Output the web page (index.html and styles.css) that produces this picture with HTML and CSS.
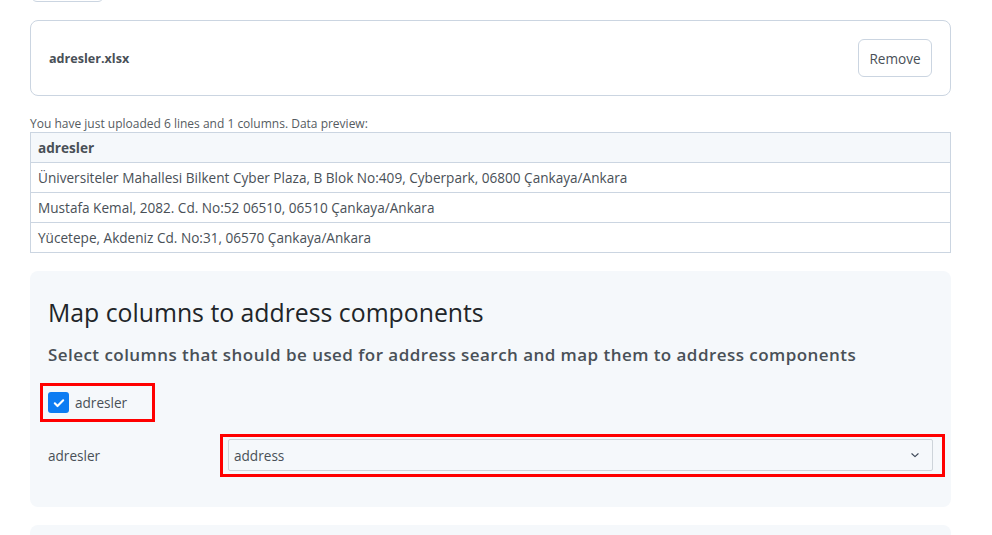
FILE: index.html
```html
<!DOCTYPE html>
<html lang="en">
<head>
<meta charset="utf-8">
<title>Upload addresses</title>
<link rel="stylesheet" href="styles.css">
</head>
<body>
<main class="page">
  <div class="top-actions">
    <button class="btn btn-outline" type="button" aria-label="Browse"></button>
  </div>

  <section class="file-card">
    <span class="file-name">adresler.xlsx</span>
    <button class="btn btn-outline" type="button">Remove</button>
  </section>

  <p class="upload-note">You have just uploaded 6 lines and 1 columns. Data preview:</p>
  <table class="preview">
    <thead>
      <tr><th>adresler</th></tr>
    </thead>
    <tbody>
      <tr><td>Üniversiteler Mahallesi Bilkent Cyber Plaza, B Blok No:409, Cyberpark, 06800 Çankaya/Ankara</td></tr>
      <tr><td>Mustafa Kemal, 2082. Cd. No:52 06510, 06510 Çankaya/Ankara</td></tr>
      <tr><td>Yücetepe, Akdeniz Cd. No:31, 06570 Çankaya/Ankara</td></tr>
    </tbody>
  </table>

  <section class="panel">
    <h2 class="panel-title">Map columns to address components</h2>
    <h3 class="panel-sub">Select columns that should be used for address search and map them to address components</h3>

    <div class="column-picks">
      <label class="check marked-check">
        <span class="check-box">
          <svg viewBox="0 0 16 16" width="14" height="14" aria-hidden="true"><path d="M3.2 8.4l3.1 3.1 6.5-6.6" fill="none" stroke="#fff" stroke-width="2.4" stroke-linecap="round" stroke-linejoin="round"/></svg>
        </span>
        <span class="check-label">adresler</span>
      </label>
    </div>

    <div class="map-row">
      <span class="map-label">adresler</span>
      <div class="select-wrap highlight">
        <div class="select">
          <span>address</span>
          <svg class="chev" viewBox="0 0 16 16" width="10" height="10" aria-hidden="true"><path d="M3 6l5 4.5L13 6" fill="none" stroke="#3b4656" stroke-width="1.8" stroke-linecap="round" stroke-linejoin="round"/></svg>
        </div>
      </div>
    </div>
  </section>

  <section class="panel panel-next"></section>
</main>
</body>
</html>
```

FILE: styles.css
```css
* { box-sizing: border-box; }

html, body {
  margin: 0;
  background: #fff;
  overflow: hidden;
}

body {
  font-family: "Open Sans", "Noto Sans", "Liberation Sans", sans-serif;
  color: #495057;
  font-size: 14px;
}

.page {
  width: 921px;
  margin-left: 30px;
  display: flex;
  flex-direction: column;
}

/* buttons */
.btn {
  font: inherit;
  font-size: 14px;
  color: #495057;
  background: #fff;
  border: 1px solid #cbd5e1;
  border-radius: 6px;
  height: 38px;
  padding: 0 11px;
  cursor: pointer;
}

.top-actions {
  margin-top: -36px;
  height: 38px;
}
.top-actions .btn { width: 73px; margin-left: 1px; }

/* uploaded file card */
.file-card {
  margin-top: 18px;
  border: 1px solid #cbd5e1;
  border-radius: 8px;
  padding: 18px 18px;
  display: flex;
  align-items: center;
  justify-content: space-between;
}
.file-name {
  font-weight: 700;
  font-size: 12.6px;
  color: #495057;
}
.file-card .btn {
  width: 74px;
  padding: 0;
  font-size: 13.6px;
}

.upload-note {
  margin: 20px 0 0;
  font-size: 12px;
  line-height: 16px;
  color: #555b61;
}

/* data preview */
.preview {
  border-collapse: collapse;
  width: 100%;
  font-size: 13.6px;
}
.preview th, .preview td {
  border: 1px solid #cbd5e1;
  height: 30px;
  padding: 0 7px;
  text-align: left;
  color: #495057;
}
.preview th {
  background: #f5f8fb;
  font-weight: 700;
}

/* mapping panel */
.panel {
  margin-top: 18px;
  background: #f5f8fb;
  border-radius: 8px;
  padding: 21px 18px 36px;
}
.panel-title {
  margin: 0;
  font-size: 24.8px;
  font-weight: 500;
  line-height: 40px;
  color: #212529;
}
.panel-sub {
  margin: 11px 0 0;
  font-size: 17px;
  font-weight: 600;
  letter-spacing: 0.45px;
  line-height: 24px;
  color: #495057;
}

.column-picks {
  margin-top: 16px;
  display: flex;
}

/* checked column, framed in red */
.check {
  display: flex;
  align-items: center;
  gap: 6px;
  width: 115px;
  height: 39px;
  margin-left: -8px;
  padding: 6px 5px;
  border: 3px solid #f00;
}
.check-box {
  flex: none;
  width: 21px;
  height: 21px;
  border-radius: 3px;
  background: #0d7cf2;
  display: flex;
  align-items: center;
  justify-content: center;
}
.check-label { font-size: 13.6px; }

.map-row {
  margin-top: 17px;
  display: grid;
  grid-template-columns: 180px 1fr;
  align-items: center;
  font-size: 13.6px;
}
.select {
  height: 32px;
  border: 1px solid #ced4da;
  border-radius: 2px;
  background: #f5f8fb;
  display: flex;
  align-items: center;
  justify-content: space-between;
  padding: 0 12px 0 5px;
  font-size: 13.6px;
  color: #495057;
}

/* red annotation frame drawn over the select */
.highlight { position: relative; }
.highlight::after {
  content: "";
  position: absolute;
  left: -8px;
  top: -5px;
  right: -12px;
  bottom: -6px;
  border: 3px solid #f00;
  pointer-events: none;
}

.panel-next {
  height: 10px;
  padding: 0;
  border-radius: 8px 8px 0 0;
}
```
